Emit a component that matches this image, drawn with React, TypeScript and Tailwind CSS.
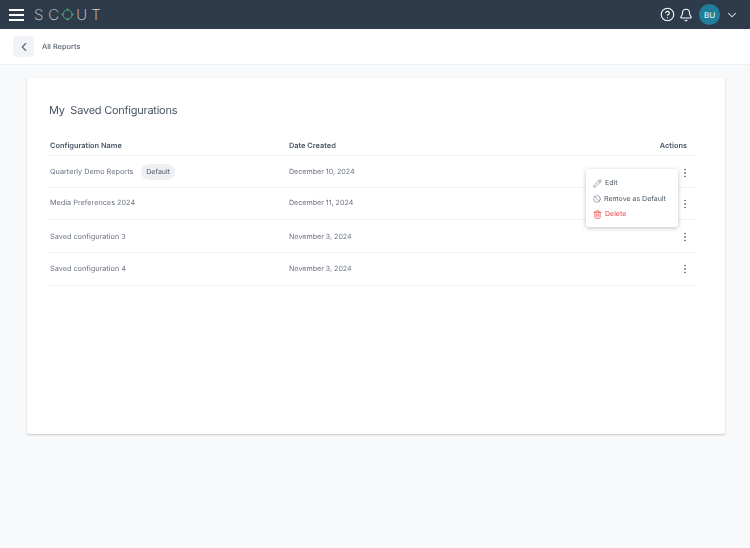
import React from 'react'
import { ChevronLeft, ChevronDown, Bell, CircleHelp, Pencil, Ban, Trash2, EllipsisVertical } from 'lucide-react'

const ROWS = [
  { name: 'Quarterly Demo Reports', date: 'December 10, 2024', isDefault: true, h: 'h-[32px]', text: 'pt-[1px]', dot: 'mt-[3px]' },
  { name: 'Media Preferences 2024', date: 'December 11, 2024', isDefault: false, h: 'h-[32px]', text: 'pb-[1px]', dot: 'mt-0' },
  { name: 'Saved configuration 3', date: 'November 3, 2024', isDefault: false, h: 'h-[33px]', text: 'pt-[3px]', dot: 'mt-[2px]' },
  { name: 'Saved configuration 4', date: 'November 3, 2024', isDefault: false, h: 'h-[33px]', text: 'pt-[1px]', dot: 'mt-0' },
]

function LogoRing() {
  return (
    <svg width="13" height="13" viewBox="0 0 13 13" fill="none" className="mx-[2px]">
      <circle cx="6.5" cy="6.5" r="4.6" stroke="#4fa66f" strokeWidth="1" />
      <path d="M6.5 0.5v2M6.5 10.5v2M0.5 6.5h2M10.5 6.5h2" stroke="#4fa66f" strokeWidth="1.4" />
    </svg>
  )
}

export default function App() {
  return (
    <div className="h-[548px] w-[750px] overflow-hidden bg-[#f8f9fb] font-['Inter',sans-serif] text-[#4b5563] [text-rendering:geometricPrecision]">
      <div className="will-change-[opacity]">
        <header className="flex h-[29px] items-center justify-between bg-[#2d3b4a] pl-[9px] pr-[11px]">
          <div className="flex items-center">
            <div className="flex w-[15px] flex-col gap-[3px]">
              <span className="h-[2px] bg-white" />
              <span className="h-[2px] bg-white" />
              <span className="h-[2px] bg-white" />
            </div>
            <div className="ml-[10px] flex items-center text-[15px] font-extralight leading-none text-[#d5d9de]">
              <span className="mr-[5px]">S</span>
              <span>C</span>
              <LogoRing />
              <span className="mr-[4px]">U</span>
              <span>T</span>
            </div>
          </div>
          <div className="flex items-center">
            <CircleHelp size={15} color="#fff" strokeWidth={1.8} />
            <Bell size={14} color="#fff" strokeWidth={1.8} className="ml-[4px]" />
            <div className="ml-[6px] flex h-[21px] w-[21px] items-center justify-center rounded-full bg-[#1f7f9a] text-[8px] text-white">
              BU
            </div>
            <ChevronDown size={14} color="#e5e7eb" strokeWidth={1.8} className="ml-[5px]" />
          </div>
        </header>

        <div className="flex h-[36px] items-center border-b border-[#eef0f3] bg-white pl-[13px]">
          <button className="flex h-[21px] w-[21px] items-center justify-center rounded-[4px] bg-[#f1f3f6]">
            <ChevronLeft size={14} color="#5b6b82" strokeWidth={2} />
          </button>
          <span className="ml-[8px] pt-[1px] text-[7.4px] font-medium text-[#5a6472]">All Reports</span>
        </div>

        <main className="ml-[27px] mr-[25px] mt-[13px] h-[356px] rounded-[2px] bg-white pl-[20px] pr-[29px] shadow-[0_1px_2px_rgba(0,0,0,0.22)]">
          <h1 className="pl-[2px] pt-[24px] text-[11px] leading-[16px] tracking-[-0.25px] text-[#4a5565]">
            My&nbsp; Saved Configurations
          </h1>

          <div className="relative mt-[21px]">
            <div className="flex h-[17px] items-start border-b border-[#f0f1f4] pt-[1px] text-[7.4px] font-semibold text-[#4a5565]">
              <span className="w-[242px] pl-[3px]">Configuration Name</span>
              <span>Date Created</span>
              <span className="ml-auto pr-[9px]">Actions</span>
            </div>

            {ROWS.map((row) => (
              <div key={row.name} className={`flex items-center border-b border-[#f0f1f4] text-[7.3px] text-[#6b7280] ${row.h}`}>
                <div className={`flex w-[242px] items-center pl-[3px] ${row.text}`}>
                  <span>{row.name}</span>
                  {row.isDefault && (
                    <span className="ml-[8px] flex h-[16px] items-center rounded-full bg-[#eef0f3] px-[5px] text-[7px] text-[#4a5565]">
                      Default
                    </span>
                  )}
                </div>
                <span className={`text-[7.1px] ${row.text}`}>{row.date}</span>
                <EllipsisVertical size={12} color="#6b7280" strokeWidth={2} className={`ml-auto mr-[5px] ${row.dot}`} />
              </div>
            ))}

            <div className="absolute left-[539px] top-[30px] w-[92px] rounded-[3px] bg-white pb-[5px] pl-[7px] pt-[7px] shadow-[0_1px_4px_rgba(0,0,0,0.25)]">
              <div className="flex h-[15px] items-center text-[7px] text-[#4a5565]">
                <Pencil size={9} color="#6b7280" strokeWidth={1.7} />
                <span className="ml-[3px]">Edit</span>
              </div>
              <div className="flex h-[16px] items-center text-[7px] text-[#4a5565]">
                <Ban size={8} color="#6b7280" strokeWidth={1.7} />
                <span className="ml-[3px]">Remove as Default</span>
              </div>
              <div className="flex h-[15px] items-center text-[7px] text-[#ef4444]">
                <Trash2 size={9} color="#ef4444" strokeWidth={2} />
                <span className="ml-[3px]">Delete</span>
              </div>
            </div>
          </div>
        </main>
      </div>
    </div>
  )
}
